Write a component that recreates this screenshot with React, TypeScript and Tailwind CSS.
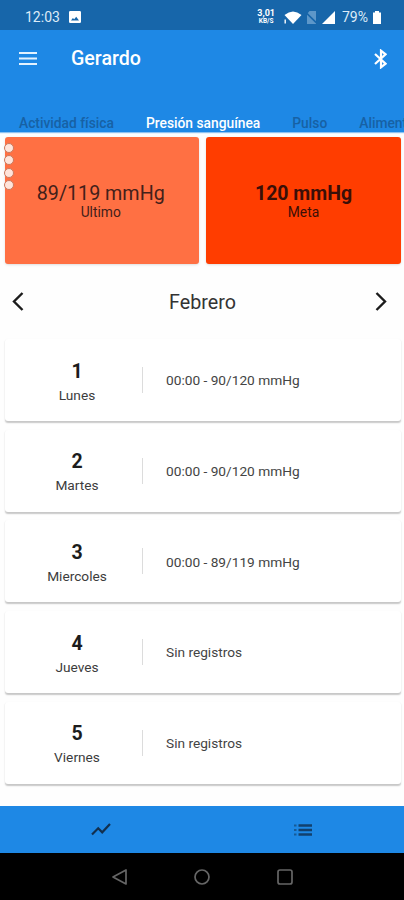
type Day = {
  number: number;
  name: string;
  record: string;
};

const tabs = ['Actividad física', 'Presión sanguínea', 'Pulso', 'Alimentación'];

const days: Day[] = [
  { number: 1, name: 'Lunes', record: '00:00 - 90/120 mmHg' },
  { number: 2, name: 'Martes', record: '00:00 - 90/120 mmHg' },
  { number: 3, name: 'Miercoles', record: '00:00 - 89/119 mmHg' },
  { number: 4, name: 'Jueves', record: 'Sin registros' },
  { number: 5, name: 'Viernes', record: 'Sin registros' },
];

function StatusBar() {
  return (
    <div className="flex h-[30px] shrink-0 items-center bg-[#1766aa] pt-[4px] pl-[25px] pr-[23px] text-[#dcebf8]">
      <span className="text-[14px] leading-none">12:03</span>
      <svg className="ml-[9px] size-[12px]" viewBox="0 0 12 12">
        <path
          fillRule="evenodd"
          d="M1.3 0h9.4Q12 0 12 1.3v9.4q0 1.3-1.3 1.3H1.3Q0 12 0 10.7V1.3Q0 0 1.3 0zM2 9.6h8L7.2 5.8 5.2 8.3 3.9 7z"
          fill="#fff"
        />
      </svg>
      <div className="ml-auto flex flex-col items-center font-bold text-white">
        <span className="text-[9px] leading-[9px]">3,01</span>
        <span className="text-[6.500px] leading-[7px]">KB/S</span>
      </div>
      <svg className="ml-[9px] h-[13px] w-[18px]" viewBox="0 0 18 13">
        <path d="M0.500 4Q9-3 17.500 4L9 13z" fill="#fff" />
        <path d="M1.200 8.500v4" stroke="#fff" strokeWidth="1.400" />
      </svg>
      <svg className="ml-[4px] h-[13px] w-[11px]" viewBox="0 0 11 13">
        <path d="M3.500 0H10v13H1V3z" fill="#5d97c9" />
        <path d="M0 1.500l10.500 10.500" stroke="#1766aa" strokeWidth="1.600" />
      </svg>
      <svg className="ml-[5px] size-[13px]" viewBox="0 0 13 13">
        <path d="M13 0v13H0z" fill="#fff" />
      </svg>
      <span className="ml-[7px] text-[14px] leading-none">79%</span>
      <svg className="ml-[5px] h-[13px] w-[8px]" viewBox="0 0 8 13">
        <path d="M2 0h4v1.500H8V13H0V1.500h2z" fill="#fff" />
      </svg>
    </div>
  );
}

function Header() {
  return (
    <header className="flex h-[102px] shrink-0 flex-col bg-[#1e88e5] shadow-[0_1px_1px_rgba(30,136,229,0.5)]">
      <div className="flex h-[57px] items-center pl-[19px] pr-[17px] text-white">
        <svg className="h-[13px] w-[18px]" viewBox="0 0 18 13">
          <path d="M0 1h18M0 6.500h18M0 12h18" stroke="#e3f2ff" strokeWidth="2" />
        </svg>
        <h1 className="ml-[34px] pt-px text-[19.600px] font-medium leading-none">Gerardo</h1>
        <svg className="ml-auto h-[20px] w-[13px]" viewBox="0 0 13 20" fill="none">
          <path d="M1 5l10.500 9.700L7 18.300V1.700l4.500 3.600L1 15" stroke="#fff" strokeWidth="2.200" />
        </svg>
      </div>
      <nav className="flex flex-1 items-end gap-[32px] overflow-hidden pb-[1px] pl-[19px] text-[13.800px] font-medium">
        {tabs.map((tab) => (
          <a
            key={tab}
            href="#"
            className={
              tab === 'Presión sanguínea'
                ? 'shrink-0 leading-[16px] text-white'
                : 'shrink-0 leading-[16px] text-[#1761a4]'
            }
          >
            {tab}
          </a>
        ))}
      </nav>
    </header>
  );
}

function Summary() {
  return (
    <section className="flex shrink-0 gap-[7px] pt-[5px] pl-[4.500px] pr-[3px]">
      <div className="relative flex h-[127px] w-[194.500px] flex-col items-center justify-center rounded-[3px] bg-[#ff7043] pt-[1px] pr-[2px] text-[#43201a] shadow-sm">
        <p className="text-[19.700px] leading-[21px]">89/119 mmHg</p>
        <p className="text-[13.800px] leading-[16px]">Ultimo</p>
        <div className="absolute top-[6px] left-[-1px] flex flex-col gap-[2.300px]">
          <i className="size-[10px] rounded-full border border-[#c9795f] bg-[#ffe4da]" />
          <i className="size-[10px] rounded-full border border-[#c9795f] bg-[#ffe4da]" />
          <i className="size-[10px] rounded-full border border-[#c9795f] bg-[#ffe4da]" />
          <i className="size-[10px] rounded-full border border-[#c9795f] bg-[#ffe4da]" />
        </div>
      </div>
      <div className="flex h-[127px] flex-1 flex-col items-center justify-center rounded-[3px] bg-[#ff3d00] pt-[1px] text-[#3a0f08] shadow-sm">
        <p className="text-[19.500px] font-bold leading-[21px]">120 mmHg</p>
        <p className="text-[13.800px] leading-[16px]">Meta</p>
      </div>
    </section>
  );
}

function MonthPicker() {
  return (
    <div className="flex h-[75px] shrink-0 items-center justify-between pl-[12px] pr-[17px]">
      <svg className="h-[19px] w-[12px]" viewBox="0 0 12 19" fill="none">
        <path d="M10.500 1L2 9.500l8.500 8.500" stroke="#1c1c1c" strokeWidth="2.400" />
      </svg>
      <span className="pt-[2px] pl-[6px] text-[19.700px] text-[#333]">Febrero</span>
      <svg className="h-[19px] w-[12px]" viewBox="0 0 12 19" fill="none">
        <path d="M1.500 1L10 9.500 1.500 18" stroke="#1c1c1c" strokeWidth="2.400" />
      </svg>
    </div>
  );
}

function DayCard({ day }: { day: Day }) {
  return (
    <li className="flex h-[82px] items-center rounded-[3px] bg-white shadow-[0_1.500px_1.500px_rgba(0,0,0,0.22)]">
      <div className="flex w-[137px] flex-col items-center pt-[5px] pl-[8px]">
        <span className="text-[19.500px] font-bold leading-[24px] text-[#1c1c1c]">{day.number}</span>
        <span className="text-[13.700px] leading-[22px] text-[#3c3c3c]">{day.name}</span>
      </div>
      <div className="h-[26px] w-px bg-[#dcdcdc]" />
      <span className="ml-[23.500px] pt-px text-[13.700px] text-[#444]">{day.record}</span>
    </li>
  );
}

function BottomBar() {
  return (
    <div className="flex h-[47px] shrink-0 items-center bg-[#1e88e5]">
      <div className="flex flex-1 justify-center">
        <svg className="h-[13px] w-[20px]" viewBox="0 0 20 13" fill="none">
          <path d="M1 11.500l6.200-6.200 4 4L19 1" stroke="#12304f" strokeWidth="2.200" />
        </svg>
      </div>
      <div className="flex flex-1 justify-center pl-[1px]">
        <svg className="h-[12px] w-[18px]" viewBox="0 0 18 12" fill="none">
          <path d="M0 1.500h2.500M0 6h2.500M0 10.500h2.500" stroke="#175a96" strokeWidth="2.200" />
          <path d="M4.500 1.500H18M4.500 6H18M4.500 10.500H18" stroke="#12406e" strokeWidth="2.600" />
        </svg>
      </div>
    </div>
  );
}

function SystemBar() {
  return (
    <div className="flex h-[47px] shrink-0 items-center justify-center gap-[67px] bg-black">
      <svg className="size-[16px]" viewBox="0 0 16 16" fill="none">
        <path d="M15 1v14L2 8z" stroke="#666" strokeWidth="1.700" strokeLinejoin="round" />
      </svg>
      <svg className="size-[16px]" viewBox="0 0 16 16" fill="none">
        <circle cx="8" cy="8" r="7" stroke="#666" strokeWidth="1.700" />
      </svg>
      <svg className="size-[16px]" viewBox="0 0 16 16" fill="none">
        <rect x="1" y="1" width="14" height="14" rx="2" stroke="#666" strokeWidth="1.700" />
      </svg>
    </div>
  );
}

export default function App() {
  return (
    <div className="flex h-[900px] w-[404px] flex-col overflow-hidden bg-[#fefefe] font-['Roboto',sans-serif]">
      <StatusBar />
      <Header />
      <Summary />
      <MonthPicker />
      <ul className="flex flex-1 flex-col gap-[8.700px] pl-[4.500px] pr-[3px]">
        {days.map((day) => (
          <DayCard key={day.number} day={day} />
        ))}
      </ul>
      <BottomBar />
      <SystemBar />
    </div>
  );
}
